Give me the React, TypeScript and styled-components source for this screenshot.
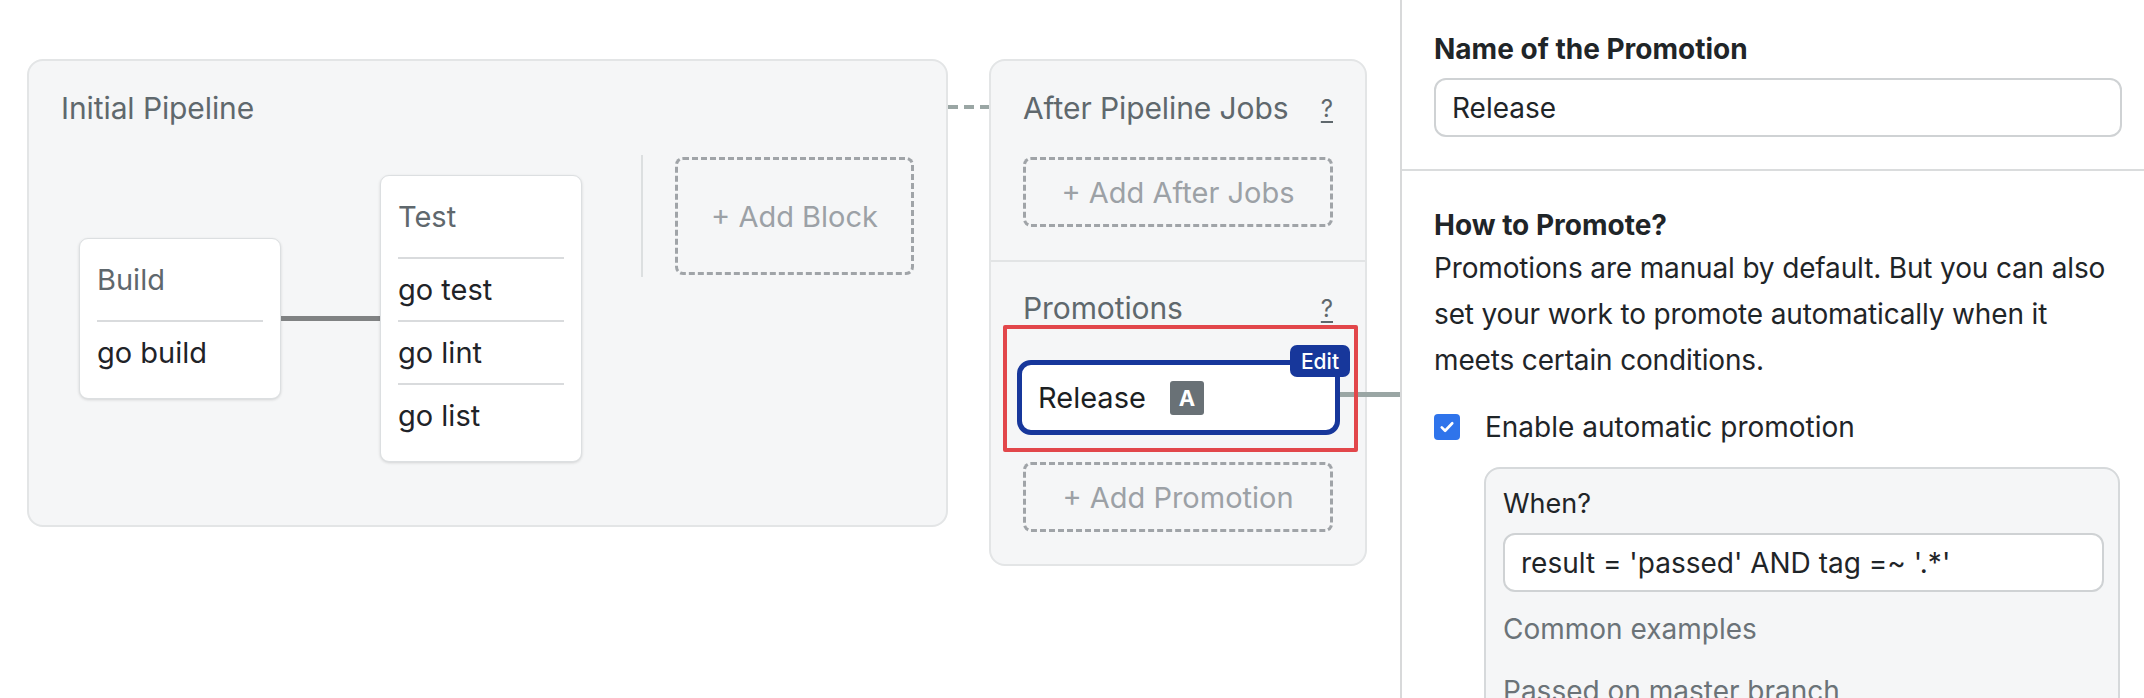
import React from "react";
import styled, { createGlobalStyle } from "styled-components";

const GlobalStyle = createGlobalStyle`
  html, body { margin: 0; padding: 0; background: #ffffff; }
  body { font-family: Inter, "Noto Sans", sans-serif; overflow: hidden; }
  * { box-sizing: border-box; }
`;

const Page = styled.div`
  display: flex;
  width: 2144px;
  height: 698px;
  overflow: hidden;
`;

const Canvas = styled.div`
  width: 1400px;
  flex: none;
  display: flex;
  align-items: flex-start;
  padding: 59px 0 0 27px;
`;

const Panel = styled.div<{ $w: number }>`
  width: ${(p) => p.$w}px;
  flex: none;
  background: #f5f6f7;
  border: 2px solid #e3e5e6;
  border-radius: 16px;
`;

const PipelinePanel = styled(Panel)`
  padding: 32px 33px 44px 32px;
`;

const PanelTitle = styled.div`
  display: flex;
  justify-content: space-between;
  align-items: flex-start;
  height: 31px;
  font-size: 30px;
  line-height: 31px;
  color: #5f686d;
  letter-spacing: -0.1px;
`;

const HelpLink = styled.span`
  font-size: 24px;
  line-height: 31px;
  color: #5f686d;
  text-decoration: underline;
  text-underline-offset: 4px;
  text-decoration-thickness: 2px;
`;

const ContentRow = styled.div`
  display: flex;
  align-items: flex-start;
  height: 326px;
  margin-top: 31px;
`;

const Stages = styled.div`
  display: flex;
  align-items: center;
  align-self: stretch;
  padding-left: 18px;
`;

const BlockCard = styled.div`
  width: 202px;
  flex: none;
  background: #ffffff;
  border: 1px solid #dcdfe1;
  border-radius: 9px;
  box-shadow: 0 1px 3px rgba(0, 0, 0, 0.14);
  padding: 0 17px 15px;
`;

const BlockTitle = styled.div`
  padding: 25px 0 25px;
  font-size: 29px;
  line-height: 31px;
  color: #5f686d;
`;

const JobRow = styled.div`
  border-top: 2px solid #d9dbdd;
  padding: 15px 0;
  font-size: 29px;
  line-height: 31px;
  color: #1f2328;
`;

const SolidLink = styled.div`
  width: 99px;
  height: 5px;
  flex: none;
  background: #808283;
`;

const VDivider = styled.div`
  width: 2px;
  height: 122px;
  flex: none;
  margin-left: 59px;
  background: #dcdfe0;
`;

const DashedBox = styled.div<{ $w?: number; $h: number }>`
  width: ${(p) => (p.$w ? `${p.$w}px` : "auto")};
  height: ${(p) => p.$h}px;
  flex: none;
  display: flex;
  align-items: center;
  justify-content: center;
  border: 3px dashed #a0a4a8;
  border-radius: 8px;
  color: #9ca1a6;
  font-size: 29px;
`;

const AddBlock = styled(DashedBox)`
  margin-left: 32px;
  margin-top: 2px;
`;

const DashedLink = styled.div`
  width: 41px;
  height: 4px;
  flex: none;
  margin-top: 46px;
  background: repeating-linear-gradient(90deg, #9aa6a4 0 10px, transparent 10px 16px);
`;

const Section = styled.div<{ $divider?: boolean }>`
  padding: ${(p) => (p.$divider ? "31px" : "32px")} 32px ${(p) => (p.$divider ? "32px" : "33px")};
  border-top: ${(p) => (p.$divider ? "2px solid #e2e4e5" : "none")};
`;

const AfterJobsBox = styled(DashedBox)`
  margin-top: 33px;
`;

const AddPromotionBox = styled(DashedBox)`
  margin-top: 10px;
`;

const Highlight = styled.div`
  position: relative;
  margin: 1px -25px 0 -20px;
  padding: 35px 18px 17px 14px;
  &::after {
    content: "";
    position: absolute;
    inset: 0;
    border: 4px solid #e2474b;
    border-radius: 2px;
    pointer-events: none;
  }
`;

const PromotionCard = styled.div`
  position: relative;
  height: 75px;
  display: flex;
  align-items: center;
  padding-left: 16px;
  background: #ffffff;
  border: 5px solid #17379b;
  border-radius: 14px;
`;

const PromotionName = styled.span`
  font-size: 29px;
  color: #1c1f23;
`;

const AutoBadge = styled.span`
  width: 34px;
  height: 34px;
  margin-left: 24px;
  display: flex;
  align-items: center;
  justify-content: center;
  border-radius: 3px;
  background: #697176;
  color: #ffffff;
  font-size: 22px;
  font-weight: 700;
`;

const EditBadge = styled.span`
  position: absolute;
  top: -20px;
  right: -15px;
  width: 60px;
  height: 32px;
  display: flex;
  align-items: center;
  justify-content: center;
  border-radius: 7px;
  background: #17379b;
  color: #ffffff;
  font-size: 21px;
  font-weight: 500;
`;

const PromotionLink = styled.span`
  position: absolute;
  left: calc(100% + 5px);
  top: 27px;
  width: 60px;
  height: 5px;
  background: #9aa6a4;
`;

const Sidebar = styled.div`
  flex: 1;
  height: 698px;
  border-left: 2px solid #d8d9da;
  background: #ffffff;
  color: #1f2528;
`;

const SideSection = styled.div<{ $top: number; $bottom: number; $divider?: boolean }>`
  padding: ${(p) => p.$top}px 22px ${(p) => p.$bottom}px 32px;
  border-bottom: ${(p) => (p.$divider ? "2px solid #dadcdd" : "none")};
`;

const FieldLabel = styled.div`
  font-size: 28px;
  line-height: 36px;
  font-weight: 700;
  color: #1f2528;
`;

const TextInput = styled.div<{ $mt: number }>`
  height: 59px;
  margin-top: ${(p) => p.$mt}px;
  display: flex;
  align-items: center;
  padding-left: 16px;
  background: #ffffff;
  border: 2px solid #cfd2d4;
  border-radius: 12px;
  font-size: 28px;
  color: #1f2528;
  white-space: nowrap;
`;

const Paragraph = styled.p`
  margin: 2px 0 0;
  font-size: 28px;
  line-height: 46px;
  color: #1f2528;
  white-space: nowrap;
  letter-spacing: -0.15px;
`;

const CheckRow = styled.label`
  display: flex;
  align-items: center;
  height: 36px;
  margin-top: 26px;
  font-size: 28px;
  line-height: 36px;
  color: #1f2528;
`;

const CheckBox = styled.span`
  width: 26px;
  height: 26px;
  flex: none;
  display: flex;
  align-items: center;
  justify-content: center;
  border-radius: 4px;
  background: #2f74eb;
  margin-right: 25px;
`;

const WhenBox = styled.div`
  margin: 22px 2px 0 50px;
  padding: 17px 14px 40px 17px;
  background: #f5f6f7;
  border: 2px solid #d6d9db;
  border-radius: 16px;
`;

const SmallLabel = styled.div`
  font-size: 27px;
  line-height: 36px;
  color: #1f2528;
`;

const MutedLine = styled.div<{ $mt: number }>`
  margin-top: ${(p) => p.$mt}px;
  font-size: 28px;
  line-height: 36px;
  color: #6b7378;
`;

const blocks = [
  { name: "Build", jobs: ["go build"] },
  { name: "Test", jobs: ["go test", "go lint", "go list"] },
];

export default function App() {
  return (
    <>
      <GlobalStyle />
      <Page>
        <Canvas>
          <PipelinePanel $w={921}>
            <PanelTitle>Initial Pipeline</PanelTitle>
            <ContentRow>
              <Stages>
                {blocks.map((b, i) => (
                  <React.Fragment key={b.name}>
                    {i > 0 && <SolidLink />}
                    <BlockCard>
                      <BlockTitle>{b.name}</BlockTitle>
                      {b.jobs.map((j) => (
                        <JobRow key={j}>{j}</JobRow>
                      ))}
                    </BlockCard>
                  </React.Fragment>
                ))}
              </Stages>
              <VDivider />
              <AddBlock $w={239} $h={118}>+ Add Block</AddBlock>
            </ContentRow>
          </PipelinePanel>
          <DashedLink />
          <Panel $w={378}>
            <Section>
              <PanelTitle>
                <span>After Pipeline Jobs</span>
                <HelpLink>?</HelpLink>
              </PanelTitle>
              <AfterJobsBox $h={70}>+ Add After Jobs</AfterJobsBox>
            </Section>
            <Section $divider>
              <PanelTitle>
                <span>Promotions</span>
                <HelpLink>?</HelpLink>
              </PanelTitle>
              <Highlight>
                <PromotionCard>
                  <PromotionName>Release</PromotionName>
                  <AutoBadge>A</AutoBadge>
                  <EditBadge>Edit</EditBadge>
                  <PromotionLink />
                </PromotionCard>
              </Highlight>
              <AddPromotionBox $h={70}>+ Add Promotion</AddPromotionBox>
            </Section>
          </Panel>
        </Canvas>
        <Sidebar>
          <SideSection $top={31} $bottom={32} $divider>
            <FieldLabel>Name of the Promotion</FieldLabel>
            <TextInput $mt={11}>Release</TextInput>
          </SideSection>
          <SideSection $top={36} $bottom={0}>
            <FieldLabel>How to Promote?</FieldLabel>
            <Paragraph>
              Promotions are manual by default. But you can also
              <br />
              set your work to promote automatically when it
              <br />
              meets certain conditions.
            </Paragraph>
            <CheckRow>
              <CheckBox>
                <svg width="18" height="18" viewBox="0 0 24 24" fill="none">
                  <path d="M5 12.5l4.5 4.5L19 7" stroke="#ffffff" strokeWidth="3.5" strokeLinecap="round" strokeLinejoin="round" />
                </svg>
              </CheckBox>
              Enable automatic promotion
            </CheckRow>
            <WhenBox>
              <SmallLabel>When?</SmallLabel>
              <TextInput $mt={11}>result = 'passed' AND tag =~ '.*'</TextInput>
              <MutedLine $mt={19}>Common examples</MutedLine>
              <MutedLine $mt={26}>Passed on master branch</MutedLine>
            </WhenBox>
          </SideSection>
        </Sidebar>
      </Page>
    </>
  );
}
